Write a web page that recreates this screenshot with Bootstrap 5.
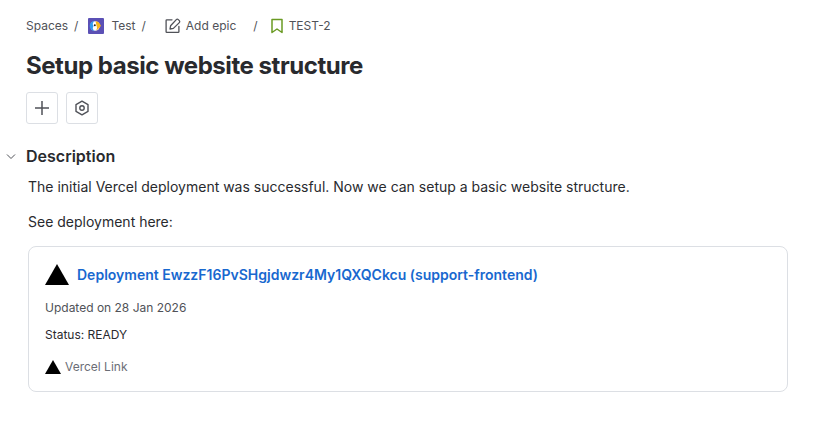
<!DOCTYPE html>
<html lang="en">
<head>
  <title>TEST-2</title>
  <meta charset="UTF-8" />
  <meta name="viewport" content="width=device-width, initial-scale=1.0" />
  <link href="https://cdn.jsdelivr.net/npm/bootstrap@5.3.0/dist/css/bootstrap.min.css" rel="stylesheet">
  <style>
    body {
      font-family: Inter, "Liberation Sans", sans-serif;
      color: #292a2e;
      background: #fff;
    }

    .issue-page {
      padding: 18px 33px 0 26px;
    }

    .crumbs {
      height: 16px;
      font-size: 12px;
      line-height: 16px;
      color: #505258;
    }

    .crumb-sep {
      margin: 0 10px 0 6px;
    }

    .crumb-sep-wide {
      margin: 0 11px 0 17px;
    }

    .crumb-space {
      margin-right: 7px;
    }

    .crumb-pencil {
      margin: 0 5px 0 9px;
    }

    .crumb-mark {
      margin-right: 4px;
    }

    .issue-title {
      margin: 18px 0 0;
      font-size: 24px;
      line-height: 28px;
      font-weight: 700;
      letter-spacing: -0.45px;
    }

    .tool-row {
      margin-top: 12px;
    }

    .tool-btn {
      width: 32px;
      height: 32px;
      padding: 0;
      border: 1px solid #dcdfe4;
      border-radius: 3px;
      background: #fff;
    }

    .desc-head {
      margin-top: 22px;
      height: 20px;
      margin-left: -21px;
    }

    .desc-head svg {
      margin-right: 9px;
    }

    .desc-head h2 {
      margin: 0;
      font-size: 16px;
      line-height: 20px;
      font-weight: 600;
    }

    .desc-body {
      margin: 0 0 0 2px;
      font-size: 14px;
      line-height: 20px;
    }

    .desc-first {
      margin-top: 11px;
    }

    .desc-second {
      margin-top: 15px;
    }

    .deploy-card {
      margin: 14px 0 0 2px;
      height: 146px;
      border: 1px solid #dcdfe4;
      border-radius: 8px;
      padding: 17px 16px 16px;
    }

    .deploy-link {
      font-size: 14px;
      line-height: 20px;
      font-weight: 600;
      color: #1868cf;
      text-decoration: none;
    }

    .deploy-meta {
      font-size: 12px;
      line-height: 16px;
      margin-top: 11px;
    }

    .deploy-updated {
      margin-top: 15px;
      color: #505258;
    }

    .vercel-link {
      margin-top: 16px;
      font-size: 12px;
      line-height: 16px;
      color: #6b6e76;
    }
  </style>
</head>
<body>
  <div class="issue-page">
    <nav class="crumbs d-flex align-items-center">
      <span>Spaces</span><span class="crumb-sep">/</span>
      <svg width="16" height="16" viewBox="0 0 16 16" class="crumb-space">
        <rect width="16" height="16" rx="1" fill="#5b50b5"/>
        <circle cx="7" cy="8" r="4.8" fill="#fff"/>
        <path d="M6.5 3.2a4.8 4.8 0 0 0 0 9.6 3.5 3.5 0 0 1-1-4.8 3.5 3.5 0 0 1 1-4.8z" fill="#2f9cf0"/>
        <path d="M7.5 3.2c2.6 0 4.3 1.8 5.5 4.8-1.2.6-2.2 3.5-5 4.6 1-1.2 1.3-3 .6-4.6-.4-1.6-.6-3.2-1.1-4.8z" fill="#f7b61c"/>
        <circle cx="6.8" cy="7.2" r="1" fill="#222"/>
      </svg>
      <span>Test</span><span class="crumb-sep">/</span>
      <svg width="16" height="16" viewBox="0 0 16 16" class="crumb-pencil" fill="none" stroke="#505258" stroke-width="1.3" stroke-linejoin="round" stroke-linecap="round">
        <path d="M7 1.8H1.8a.7.7 0 0 0-.7.7v11.2c0 .4.3.7.7.7h11.4c.4 0 .7-.3.7-.7V8.5"/>
        <path d="M5 11l.6-3.2L11.3 1.6a1.4 1.4 0 0 1 2 0l1 1a1.4 1.4 0 0 1 0 2L8.4 10.4z"/>
      </svg>
      <span>Add epic</span><span class="crumb-sep-wide">/</span>
      <svg width="16" height="16" viewBox="0 0 16 16" class="crumb-mark" fill="none" stroke="#6a9a23" stroke-width="1.5" stroke-linejoin="round">
        <path d="M3 1.5h10v13L8 11l-5 3.5z"/>
      </svg>
      <span>TEST-2</span>
    </nav>

    <h1 class="issue-title">Setup basic website structure</h1>

    <div class="tool-row d-flex gap-2">
      <button class="tool-btn d-flex align-items-center justify-content-center" type="button" aria-label="Add">
        <svg width="16" height="16" viewBox="0 0 16 16" fill="none" stroke="#505258" stroke-width="1.5">
          <path d="M8 1v14M1 8h14"/>
        </svg>
      </button>
      <button class="tool-btn d-flex align-items-center justify-content-center" type="button" aria-label="Apps">
        <svg width="16" height="16" viewBox="0 0 16 16" fill="none" stroke="#505258" stroke-width="1.4" stroke-linejoin="round">
          <path d="M8 1.2l6 3.4v6.8l-6 3.4-6-3.4V4.6z"/>
          <circle cx="8" cy="8" r="2.2"/>
        </svg>
      </button>
    </div>

    <div class="desc-head d-flex align-items-center">
      <svg width="12" height="12" viewBox="0 0 12 12" fill="none" stroke="#505258" stroke-width="1">
        <path d="M2 4.5l4 4 4-4"/>
      </svg>
      <h2>Description</h2>
    </div>

    <p class="desc-body desc-first">The initial Vercel deployment was successful. Now we can setup a basic website structure.</p>
    <p class="desc-body desc-second">See deployment here:</p>

    <div class="deploy-card">
      <div class="d-flex align-items-center gap-2">
        <svg width="24" height="21" viewBox="0 0 24 21"><path d="M12 0l12 21H0z" fill="#000"/></svg>
        <a class="deploy-link" href="#">Deployment EwzzF16PvSHgjdwzr4My1QXQCkcu (support-frontend)</a>
      </div>
      <div class="deploy-meta deploy-updated">Updated on 28 Jan 2026</div>
      <div class="deploy-meta">Status: READY</div>
      <div class="d-flex align-items-center gap-1 vercel-link">
        <svg width="16" height="14" viewBox="0 0 16 14"><path d="M8 0l8 14H0z" fill="#000"/></svg>
        <span>Vercel Link</span>
      </div>
    </div>
  </div>
  <script src="https://cdn.jsdelivr.net/npm/bootstrap@5.3.0/dist/js/bootstrap.bundle.min.js"></script>
</body>
</html>
